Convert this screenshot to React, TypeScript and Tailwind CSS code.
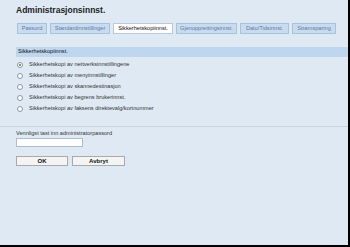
import React from "react";

const tabs = [
  { label: "Passord", w: "w-[30px]" },
  { label: "Standardinnstillinger", w: "w-[60px]" },
  { label: "Sikkerhetskopiinnst.", w: "w-[60px]", active: true },
  { label: "Gjenopprettingsinnst.", w: "w-[61px]" },
  { label: "Dato/Tidsinnst.", w: "w-[49px]" },
  { label: "Strømsparing", w: "w-[44px]" },
];

const options = [
  "Sikkerhetskopi av nettverksinnstillingene",
  "Sikkerhetskopi av menyinnstillinger",
  "Sikkerhetskopi av skannedestinasjon",
  "Sikkerhetskopi av begrens brukerinnst.",
  "Sikkerhetskopi av faksens direktevalg/kortnummer",
];

export default function App() {
  return (
    <div className="w-[350px] h-[247px] bg-[#dee9f4] border-r-2 border-b-2 border-black font-['Liberation_Sans',Arial,sans-serif] text-[#333] overflow-hidden">
      <div className="pl-[16px] pt-[5px] text-[8.5px] leading-[10px] font-bold text-[#222]">
        Administrasjonsinnst.
      </div>
      <div className="flex pl-[17px] pt-[8px] gap-[3px]">
        {tabs.map((t) => (
          <div
            key={t.label}
            className={
              t.w +
              " h-[11px] flex items-center justify-center text-[5.6px] leading-none whitespace-nowrap border " +
              (t.active
                ? "bg-white border-[#b9c9d9] text-[#111]"
                : "bg-[#c9dcef] border-[#a9c2dc] text-[#5a79a6]")
            }
          >
            {t.label}
          </div>
        ))}
      </div>
      <div className="ml-[16px] mt-[13px] h-[10px] bg-[#bed6ee] flex items-center pl-[2px] text-[5.6px] leading-none text-[#111]">
        Sikkerhetskopiinnst.
      </div>
      <div className="pl-[17px] pt-[2px] flex flex-col">
        {options.map((o, i) => (
          <div key={o} className="h-[11px] flex items-center gap-[6px]">
            <span className="w-[6px] h-[6px] rounded-full border border-[#8a97a6] bg-white flex items-center justify-center">
              {i === 0 && <span className="w-[2px] h-[2px] rounded-full bg-[#3d8a3d]" />}
            </span>
            <span className="text-[5.6px] leading-none text-[#333]">{o}</span>
          </div>
        ))}
      </div>
      <div className="mt-[12px] h-px bg-[#c6d3e0]" />
      <div className="pl-[16px] pt-[3px] text-[5.6px] leading-[7px] text-[#333]">
        Vennligst tast inn administratorpassord
      </div>
      <div className="ml-[16px] mt-[1px] w-[67px] h-[9px] bg-white border border-[#a9bdd2]" />
      <div className="flex pl-[16px] pt-[9px] gap-[4px]">
        <div className="w-[52px] h-[10px] bg-[#f4f4f4] border border-[#aaa] flex items-center justify-center text-[6px] font-bold text-[#111] leading-none">
          OK
        </div>
        <div className="w-[53px] h-[10px] bg-[#f4f4f4] border border-[#aaa] flex items-center justify-center text-[6px] font-bold text-[#111] leading-none">
          Avbryt
        </div>
      </div>
    </div>
  );
}
